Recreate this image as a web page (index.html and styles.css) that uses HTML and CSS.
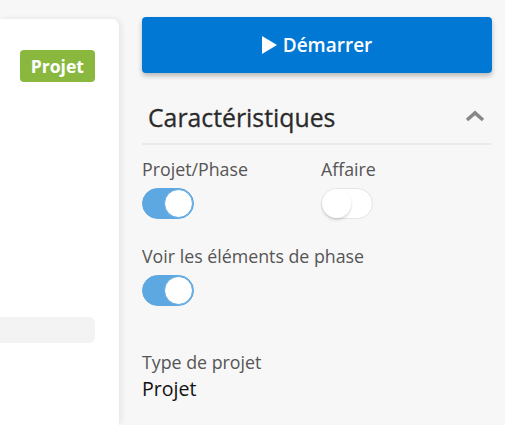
FILE: index.html
```html
<!DOCTYPE html>
<html lang="fr">
<head>
<meta charset="utf-8">
<link rel="stylesheet" href="styles.css">
</head>
<body>
<div class="page">
  <div class="card">
    <div class="card-head">
      <span class="badge">Projet</span>
    </div>
    <div class="field"></div>
  </div>
  <div class="side">
    <button class="start">
      <svg class="play" width="15" height="18" viewBox="0 0 15 18"><path d="M0 0 L15 9 L0 18 Z" fill="#fff"/></svg>
      <span>Démarrer</span>
    </button>
    <div class="section-head">
      <h2>Caractéristiques</h2>
      <svg class="chev" width="20" height="12" viewBox="0 0 20 12"><path d="M2 10 L10 3 L18 10" fill="none" stroke="#888" stroke-width="3.6"/></svg>
    </div>
    <div class="grid">
      <div class="item">
        <div class="label">Projet/Phase</div>
        <div class="toggle on"><span class="knob"></span></div>
      </div>
      <div class="item">
        <div class="label">Affaire</div>
        <div class="toggle"><span class="knob"></span></div>
      </div>
    </div>
    <div class="item single">
      <div class="label">Voir les éléments de phase</div>
      <div class="toggle on"><span class="knob"></span></div>
    </div>
    <div class="item type">
      <div class="label">Type de projet</div>
      <div class="value">Projet</div>
    </div>
  </div>
</div>
</body>
</html>
```
FILE: styles.css
```css
html, body {
  margin: 0;
  padding: 0;
  background: #f7f7f7;
  font-family: "Open Sans", "Liberation Sans", sans-serif;
  overflow: hidden;
}
.page {
  display: flex;
  align-items: flex-start;
  gap: 23px;
  height: 425px;
  overflow: hidden;
}
.card {
  width: 119px;
  margin-top: 19px;
  height: 406px;
  background: #fff;
  border-radius: 0 7px 0 0;
  box-shadow: 2px 0 6px rgba(0,0,0,0.08);
  flex: none;
  box-sizing: border-box;
  padding-right: 24px;
}
.card-head {
  display: flex;
  justify-content: flex-end;
  padding-top: 31px;
}
.badge {
  background: #8ab83f;
  color: #fff;
  font-weight: 700;
  font-size: 17.6px;
  line-height: 32px;
  height: 32px;
  padding: 0 11px;
  border-radius: 4px;
}
.field {
  margin-top: 235px;
  height: 26px;
  background: #f3f3f3;
  border-radius: 0 6px 6px 0;
}
.side {
  width: 350px;
  flex: none;
  padding-top: 17px;
}
.start {
  width: 100%;
  height: 56px;
  border: 0;
  border-radius: 4px;
  background: #0078d4;
  color: #fff;
  font-family: inherit;
  font-size: 19px;
  font-weight: 600;
  display: flex;
  align-items: center;
  justify-content: center;
  gap: 6px;
  box-shadow: 0 3px 5px rgba(0,0,0,0.25);
  padding: 0;
}
.section-head {
  display: flex;
  align-items: center;
  justify-content: space-between;
  margin-top: 29px;
  padding: 0 7px 11px 6px;
  border-bottom: 2px solid #ebebeb;
}
.section-head h2 {
  margin: 0;
  font-size: 24.8px;
  font-weight: 500;
  color: #2b2b2b;
  line-height: 30px;
  -webkit-text-stroke: 0.3px #2b2b2b;
}
.chev { margin-top: -2px; }
.grid {
  display: grid;
  grid-template-columns: 1fr 1fr;
  column-gap: 8px;
  margin-top: 12px;
}
.label {
  font-size: 17.8px;
  color: #555;
  line-height: 24px;
}
.toggle {
  margin-top: 7px;
  width: 52px;
  height: 31px;
  border-radius: 16px;
  box-sizing: border-box;
  background: #fff;
  border: 1px solid #e4e4e4;
  position: relative;
}
.toggle .knob {
  position: absolute;
  top: 0;
  left: 0;
  width: 29px;
  height: 29px;
  border-radius: 50%;
  background: #fff;
  box-shadow: 0 2px 3px rgba(0,0,0,0.15);
}
.toggle.on {
  background: #5ea8e2;
  border-color: #5ea8e2;
}
.toggle.on .knob {
  left: auto;
  right: 0;
  box-shadow: none;
  border: 1px solid #5ea8e2;
  box-sizing: border-box;
}
.single { margin-top: 25px; }
.type { margin-top: 44px; }
.value {
  font-size: 19.6px;
  color: #111;
  line-height: 26px;
  margin-top: 2px;
}
```
